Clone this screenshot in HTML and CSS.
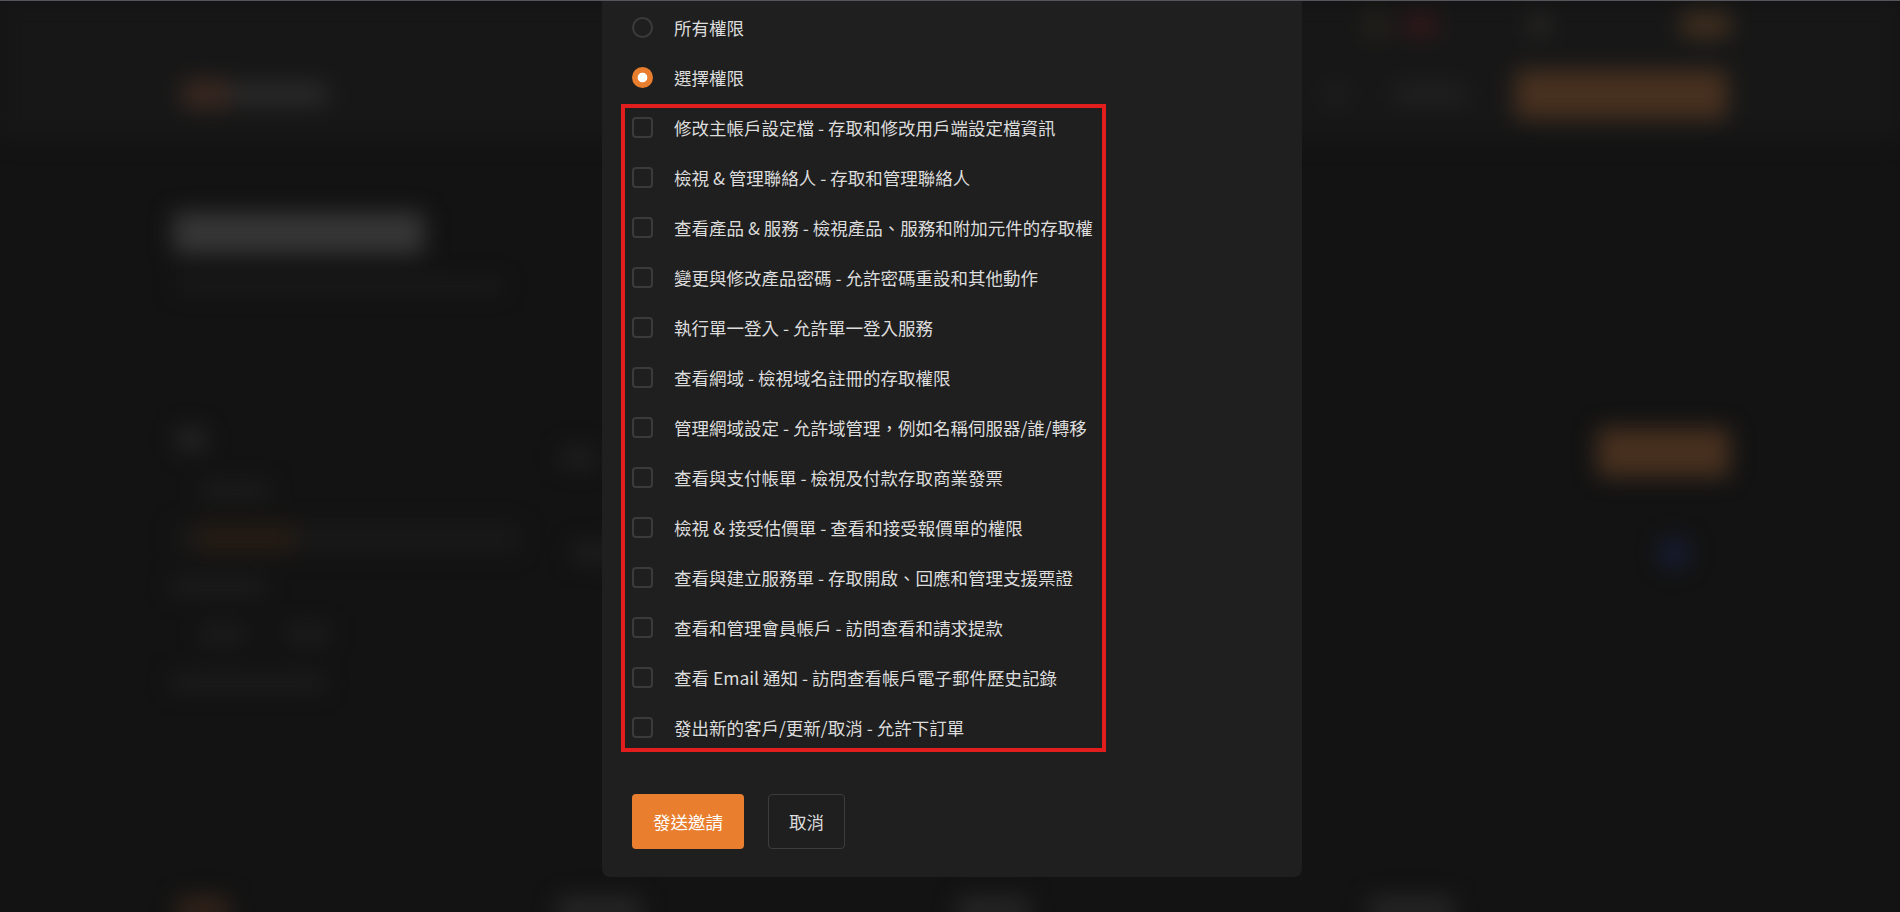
FILE: index.html
```html
<!DOCTYPE html>
<html lang="zh-Hant">
<head>
<meta charset="utf-8">
<title>邀請使用者</title>
<link rel="stylesheet" href="styles.css">
</head>
<body>
<div class="page" aria-hidden="true">
  <div class="topbar">
    <div class="wrap topbar-inner">
      <span class="tb tb-gold"></span>
      <span class="tb tb-red"></span>
      <span class="tb tb-gray"></span>
      <span class="tb tb-orange"></span>
    </div>
  </div>
  <div class="navbar">
    <div class="wrap navbar-inner">
      <div class="logo"><span class="logo-mark"></span><span class="logo-text"></span></div>
      <div class="nav-right">
        <span class="nav-link nl-short"></span>
        <span class="nav-link nl-long"></span>
        <span class="nav-cta"></span>
      </div>
    </div>
  </div>
  <div class="wrap hero">
    <div class="hero-title"></div>
    <div class="hero-sub"></div>
  </div>
  <div class="wrap body-grid">
    <aside class="side">
      <div class="side-head"></div>
      <div class="side-item si-1"></div>
      <div class="side-item si-active"><span class="si-mark"></span></div>
      <div class="side-item si-3"></div>
      <div class="side-item si-4"><span></span><span></span></div>
      <div class="side-item si-5"></div>
    </aside>
    <main class="main-card">
      <div class="card-head"><span class="ch-title"></span><span class="ch-btn"></span></div>
      <div class="card-row"><span class="cr-text"></span><span class="cr-dot"></span></div>
    </main>
  </div>
  <div class="wrap foot-row">
    <span class="fr fr-orange"></span>
    <span class="fr fr-a"></span>
    <span class="fr fr-b"></span>
    <span class="fr fr-c"></span>
  </div>
</div>

<div class="modal" role="dialog">
  <label class="row">
    <span class="radio"></span>
    <span class="label">所有權限</span>
  </label>
  <label class="row">
    <span class="radio radio-on"></span>
    <span class="label">選擇權限</span>
  </label>
  <div class="perm-group">
    <label class="row"><span class="check"></span><span class="label">修改主帳戶設定檔 - 存取和修改用戶端設定檔資訊</span></label>
    <label class="row"><span class="check"></span><span class="label">檢視 &amp; 管理聯絡人 - 存取和管理聯絡人</span></label>
    <label class="row"><span class="check"></span><span class="label">查看產品 &amp; 服務 - 檢視產品、服務和附加元件的存取權</span></label>
    <label class="row"><span class="check"></span><span class="label">變更與修改產品密碼 - 允許密碼重設和其他動作</span></label>
    <label class="row"><span class="check"></span><span class="label">執行單一登入 - 允許單一登入服務</span></label>
    <label class="row"><span class="check"></span><span class="label">查看網域 - 檢視域名註冊的存取權限</span></label>
    <label class="row"><span class="check"></span><span class="label">管理網域設定 - 允許域管理，例如名稱伺服器/誰/轉移</span></label>
    <label class="row"><span class="check"></span><span class="label">查看與支付帳單 - 檢視及付款存取商業發票</span></label>
    <label class="row"><span class="check"></span><span class="label">檢視 &amp; 接受估價單 - 查看和接受報價單的權限</span></label>
    <label class="row"><span class="check"></span><span class="label">查看與建立服務單 - 存取開啟、回應和管理支援票證</span></label>
    <label class="row"><span class="check"></span><span class="label">查看和管理會員帳戶 - 訪問查看和請求提款</span></label>
    <label class="row"><span class="check"></span><span class="label">查看 Email 通知 - 訪問查看帳戶電子郵件歷史記錄</span></label>
    <label class="row"><span class="check"></span><span class="label">發出新的客戶/更新/取消 - 允許下訂單</span></label>
  </div>
  <div class="actions">
    <button class="btn btn-primary" type="button">發送邀請</button>
    <button class="btn btn-ghost" type="button">取消</button>
  </div>
</div>
</body>
</html>
```

FILE: styles.css
```css
html, body {
  margin: 0;
  padding: 0;
}

body {
  width: 1900px;
  height: 912px;
  overflow: hidden;
  background: #131313;
  border-top: 1px solid #55555b;
  box-sizing: border-box;
  font-family: "Noto Sans CJK TC", "Noto Sans", sans-serif;
}

/* ---------- blurred page behind the dialog ---------- */
.page {
  filter: blur(11px);
}

.wrap {
  width: 1560px;
  margin: 0 auto;
}

.topbar {
  height: 47px;
  background: #171717;
}

.topbar-inner {
  height: 100%;
  display: flex;
  align-items: center;
}

.tb {
  display: block;
  height: 24px;
  border-radius: 6px;
}

.tb-gold { margin-left: auto; width: 20px; background: #28241c; }
.tb-red { margin-left: 16px; width: 37px; background: #301719; }
.tb-gray { margin-left: 91px; width: 18px; background: #2a2826; }
.tb-orange { margin-left: 133px; width: 49px; background: #42301f; }

.navbar {
  height: 92px;
  background: #171717;
}

.navbar-inner {
  height: 100%;
  display: flex;
  align-items: center;
}

.logo {
  display: flex;
  align-items: center;
  margin-left: 12px;
}

.logo-mark {
  width: 48px;
  height: 28px;
  background: #3a2820;
  border-radius: 6px;
}

.logo-text {
  width: 97px;
  height: 22px;
  background: #2a2a2a;
  border-radius: 6px;
}

.nav-right {
  margin-left: auto;
  display: flex;
  align-items: center;
  margin-right: 3px;
}

.nav-link {
  height: 18px;
  background: #212121;
  border-radius: 4px;
}

.nl-short { width: 18px; }
.nl-long { width: 73px; margin-left: 48px; }

.nav-cta {
  width: 212px;
  height: 49px;
  margin-left: 49px;
  background: #47301f;
  border-radius: 6px;
}

.hero {
  padding-top: 72px;
}

.hero-title {
  width: 251px;
  height: 42px;
  margin-left: 3px;
  background: #363636;
  border-radius: 4px;
}

.hero-sub {
  width: 327px;
  height: 12px;
  margin: 26px 0 0 6px;
  background: #1c1c1c;
  border-radius: 4px;
}

.body-grid {
  display: flex;
  margin-top: 136px;
}

.side {
  width: 350px;
  display: flex;
  flex-direction: column;
}

.side-head {
  width: 30px;
  height: 22px;
  margin-left: 6px;
  background: #252525;
  border-radius: 4px;
}

.side-item {
  height: 16px;
  margin-top: 32px;
  background: #1d1d1d;
  border-radius: 4px;
  display: flex;
}

.si-1 { width: 70px; margin-left: 30px; }
.si-active {
  width: 344px;
  height: 28px;
  margin-top: 26px;
  margin-left: 6px;
  background: #191919;
}
.si-mark {
  width: 100px;
  margin-left: 20px;
  background: #261c14;
  border-radius: 4px;
}
.si-3 { width: 95px; margin-left: 0; margin-top: 26px; }
.si-4 { width: 150px; margin-left: 30px; background: transparent; gap: 40px; }
.si-4 span { width: 45px; background: #1e1e1e; border-radius: 4px; }
.si-5 { width: 155px; margin-left: 0; }

.main-card {
  flex: 1;
  margin-left: 40px;
}

.card-head {
  display: flex;
  justify-content: space-between;
  align-items: center;
}

.ch-title {
  width: 36px;
  height: 20px;
  background: #1f1f1f;
  border-radius: 4px;
  margin-top: 10px;
}

.ch-btn {
  width: 133px;
  height: 49px;
  background: #47301f;
  border-radius: 6px;
}

.card-row {
  display: flex;
  justify-content: space-between;
  align-items: center;
  margin-top: 60px;
  padding-right: 40px;
}

.cr-text {
  width: 48px;
  height: 20px;
  margin-left: 12px;
  background: #1e1e1e;
  border-radius: 4px;
}

.cr-dot {
  width: 32px;
  height: 32px;
  border-radius: 50%;
  background: #161d33;
}

.foot-row {
  display: flex;
  align-items: center;
  margin-top: 207px;
}

.fr {
  height: 26px;
  border-radius: 6px;
}

.fr-orange { width: 54px; margin-left: 6px; background: #33231a; }
.fr-a { width: 85px; margin-left: 327px; background: #262626; }
.fr-b { width: 73px; margin-left: 315px; background: #262626; }
.fr-c { width: 85px; margin-left: 339px; background: #262626; }

/* ---------- dialog ---------- */
.modal {
  position: fixed;
  top: 1px;
  left: 602px;
  width: 700px;
  box-sizing: border-box;
  padding: 1px 30px 28px;
  background: #1f1f1f;
  border-radius: 0 0 8px 8px;
  font-size: 17.5px;
  color: #dcdcdc;
}

.row {
  display: flex;
  align-items: center;
  height: 50px;
  gap: 21px;
  white-space: nowrap;
}

.label {
  line-height: 1;
  padding-top: 2px;
}

.radio {
  flex: none;
  width: 21px;
  height: 21px;
  box-sizing: border-box;
  border: 2px solid #3b3b3b;
  border-radius: 50%;
}

.radio-on {
  border-color: #e87e2e;
  background: radial-gradient(circle, #ffffff 0 4.5px, #e87e2e 5.2px);
}

.check {
  flex: none;
  width: 21px;
  height: 21px;
  box-sizing: border-box;
  border: 2px solid #3b3b3b;
  border-radius: 4px;
}

.perm-group {
  position: relative;
  width: 485px;
  margin-left: -11px;
  padding-left: 11px;
  box-sizing: border-box;
}

.perm-group::before {
  content: "";
  position: absolute;
  top: 2px;
  left: 0;
  right: 0;
  bottom: 0;
  border: 4px solid #e11d1d;
  pointer-events: none;
}

.actions {
  display: flex;
  gap: 24px;
  margin-top: 42px;
}

.btn {
  height: 55px;
  box-sizing: border-box;
  font-family: "Noto Sans CJK TC", "Noto Sans", sans-serif;
  font-size: 17.5px;
  border-radius: 4px;
  cursor: pointer;
}

.btn-primary {
  width: 112px;
  border: none;
  background: #e87e2e;
  color: #ffffff;
}

.btn-ghost {
  width: 77px;
  border: 1px solid #3c3c3c;
  background: transparent;
  color: #dcdcdc;
}
```
